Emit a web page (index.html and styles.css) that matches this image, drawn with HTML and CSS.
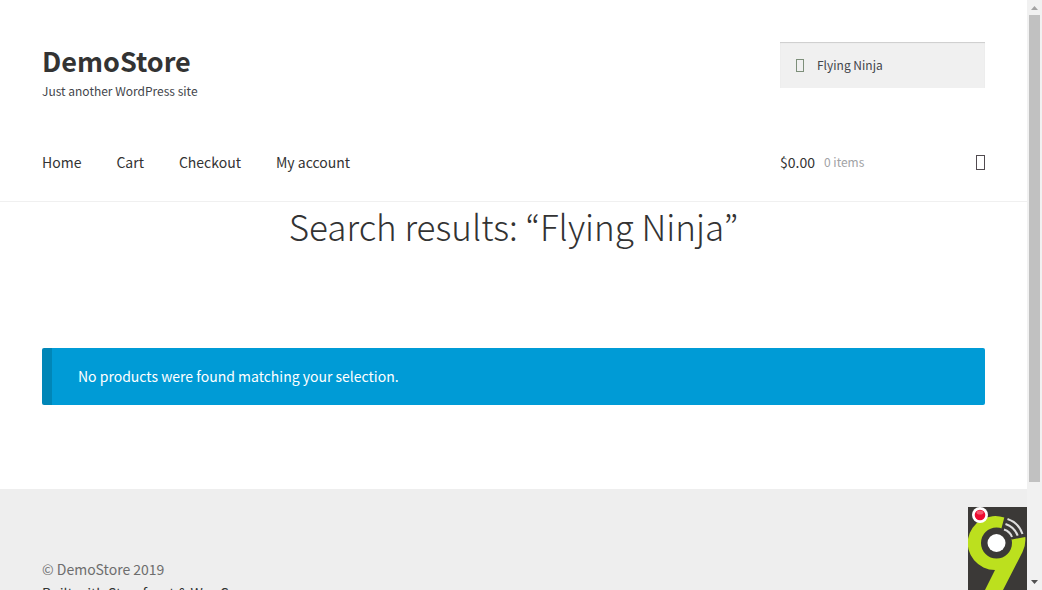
FILE: index.html
```html
<!DOCTYPE html>
<html lang="en">
<head>
<meta charset="utf-8">
<meta name="viewport" content="width=device-width, initial-scale=1">
<title>Search results – DemoStore</title>
<link rel="stylesheet" href="styles.css">
</head>
<body>
<div class="viewport">
  <div class="page">
    <header class="header">
      <div class="row">
        <div class="brand">
          <a class="site-title" href="#">DemoStore</a>
          <p class="tagline">Just another WordPress site</p>
        </div>
        <form class="search" role="search">
          <span class="glyph glyph-search"></span>
          <input class="search-input" type="search" aria-label="Search for:" value="Flying Ninja">
        </form>
      </div>
      <div class="row nav-row">
        <nav class="nav">
          <a href="#">Home</a>
          <a href="#">Cart</a>
          <a href="#">Checkout</a>
          <a href="#">My account</a>
        </nav>
        <a class="cart" href="#">
          <span>$0.00</span>
          <span class="count">0 items</span>
          <span class="glyph glyph-cart"></span>
        </a>
      </div>
    </header>
    <main class="main">
      <h1 class="page-title">Search results: “Flying Ninja”</h1>
      <p class="notice">No products were found matching your selection.</p>
    </main>
    <footer class="footer">
      <p>© DemoStore 2019</p>
      <a href="#">Built with Storefront &amp; WooCommerce</a>.
    </footer>
    <svg class="badge" viewBox="0 0 59 83" role="img" aria-label="Recorder">
      <path fill="#3b3937" d="M0 0h59v83H0z"/>
      <path fill="#bce01e" d="M36.3 10.5A27.5 27 0 1 0 27 63L17 83H35L54.500 45Q58 38 57.300 30L44 32.500L33 23Z"/>
      <circle cx="28.500" cy="36" r="15.500" fill="#3b3937"/>
      <circle cx="28.500" cy="36" r="9" fill="#fff"/>
      <g fill="none" stroke="#dedede" stroke-width="2">
        <path d="M39.500 12Q51 16 54.500 27"/>
        <path d="M37.500 17Q46.500 20 49.700 28.700"/>
        <path d="M36 22.500Q42 24.500 44 30"/>
      </g>
      <circle cx="12" cy="8" r="8" fill="#fff"/>
      <circle cx="12" cy="8" r="5.300" fill="#ee0b31"/>
      <ellipse cx="12" cy="5.500" rx="3.500" ry="2" fill="#f5566d"/>
    </svg>
  </div>
  <div class="scrollbar" aria-hidden="true">
    <svg class="arrow" viewBox="0 0 15 15"><path fill="#a3a3a3" d="M4 10L7.500 6L11 10Z"/></svg>
    <div class="track"><div class="thumb"></div></div>
    <svg class="arrow" viewBox="0 0 15 15"><path fill="#505050" d="M4 5L7.500 9L11 5Z"/></svg>
  </div>
</div>
</body>
</html>
```
FILE: styles.css
```css
* { box-sizing: border-box; }
body {
  margin: 0;
  font-family: "Noto Sans CJK KR", "Noto Sans", sans-serif;
  font-size: 14px;
  line-height: 26px;
  color: #43454b;
  background: #fff;
}
p, h1 { margin: 0; }
a { color: #333; text-decoration: none; }

.viewport { display: flex; height: 100vh; overflow: hidden; }
.page { position: relative; flex: 1; min-width: 0; overflow: hidden; }

.header { padding: 42px 42px 0; border-bottom: 1px solid #f0f0f0; }
.row {
  display: grid;
  grid-template-columns: 1fr 205px;
  align-items: start;
}
.site-title {
  display: block;
  font-size: 27px;
  line-height: 38px;
  font-weight: 700;
}
.tagline { font-size: 12px; line-height: 22px; }
.search {
  display: flex;
  align-items: center;
  gap: 13px;
  height: 46px;
  padding: 0 16px;
  background: #f0f0f0;
  box-shadow: inset 0 1px 1px rgba(0, 0, 0, 0.15);
}
.search-input {
  flex: 1;
  min-width: 0;
  padding: 0;
  border: 0;
  outline: 0;
  background: transparent;
  color: #43454b;
  font: inherit;
  font-size: 12px;
  appearance: none;
}
.glyph { display: block; border: 1px solid #333; }
.glyph-search { width: 8px; height: 13px; border-color: #7d8f7a; }
.glyph-cart { width: 9px; height: 15px; margin-left: auto; border-color: #514b50; }

.nav-row { padding: 47px 0 26px; }
.nav { display: flex; gap: 35px; }
.cart { display: flex; align-items: center; gap: 9px; }
.count { color: #a1a2a5; font-size: 12px; }

.main { padding: 0 42px 84px; }
.page-title {
  padding-bottom: 98px;
  font-size: 35px;
  line-height: 48px;
  font-weight: 300;
  text-align: center;
  color: #333;
}
.notice {
  padding: 15px 26px 16px;
  border-left: 10px solid #0086b7;
  border-radius: 2px;
  background: #009bd6;
  color: #fff;
}
.footer { padding: 68px 42px; line-height: 24px; background: #eee; color: #6d6d6d; }

.badge { position: absolute; right: 0; bottom: 0; width: 59px; height: 83px; }

.scrollbar {
  display: flex;
  flex-direction: column;
  width: 15px;
  background: #f1f1f1;
}
.arrow { display: block; width: 15px; height: 15px; }
.track { flex: 1; padding: 0 2px; }
.thumb { height: 83.4%; background: #c1c1c1; }
```
